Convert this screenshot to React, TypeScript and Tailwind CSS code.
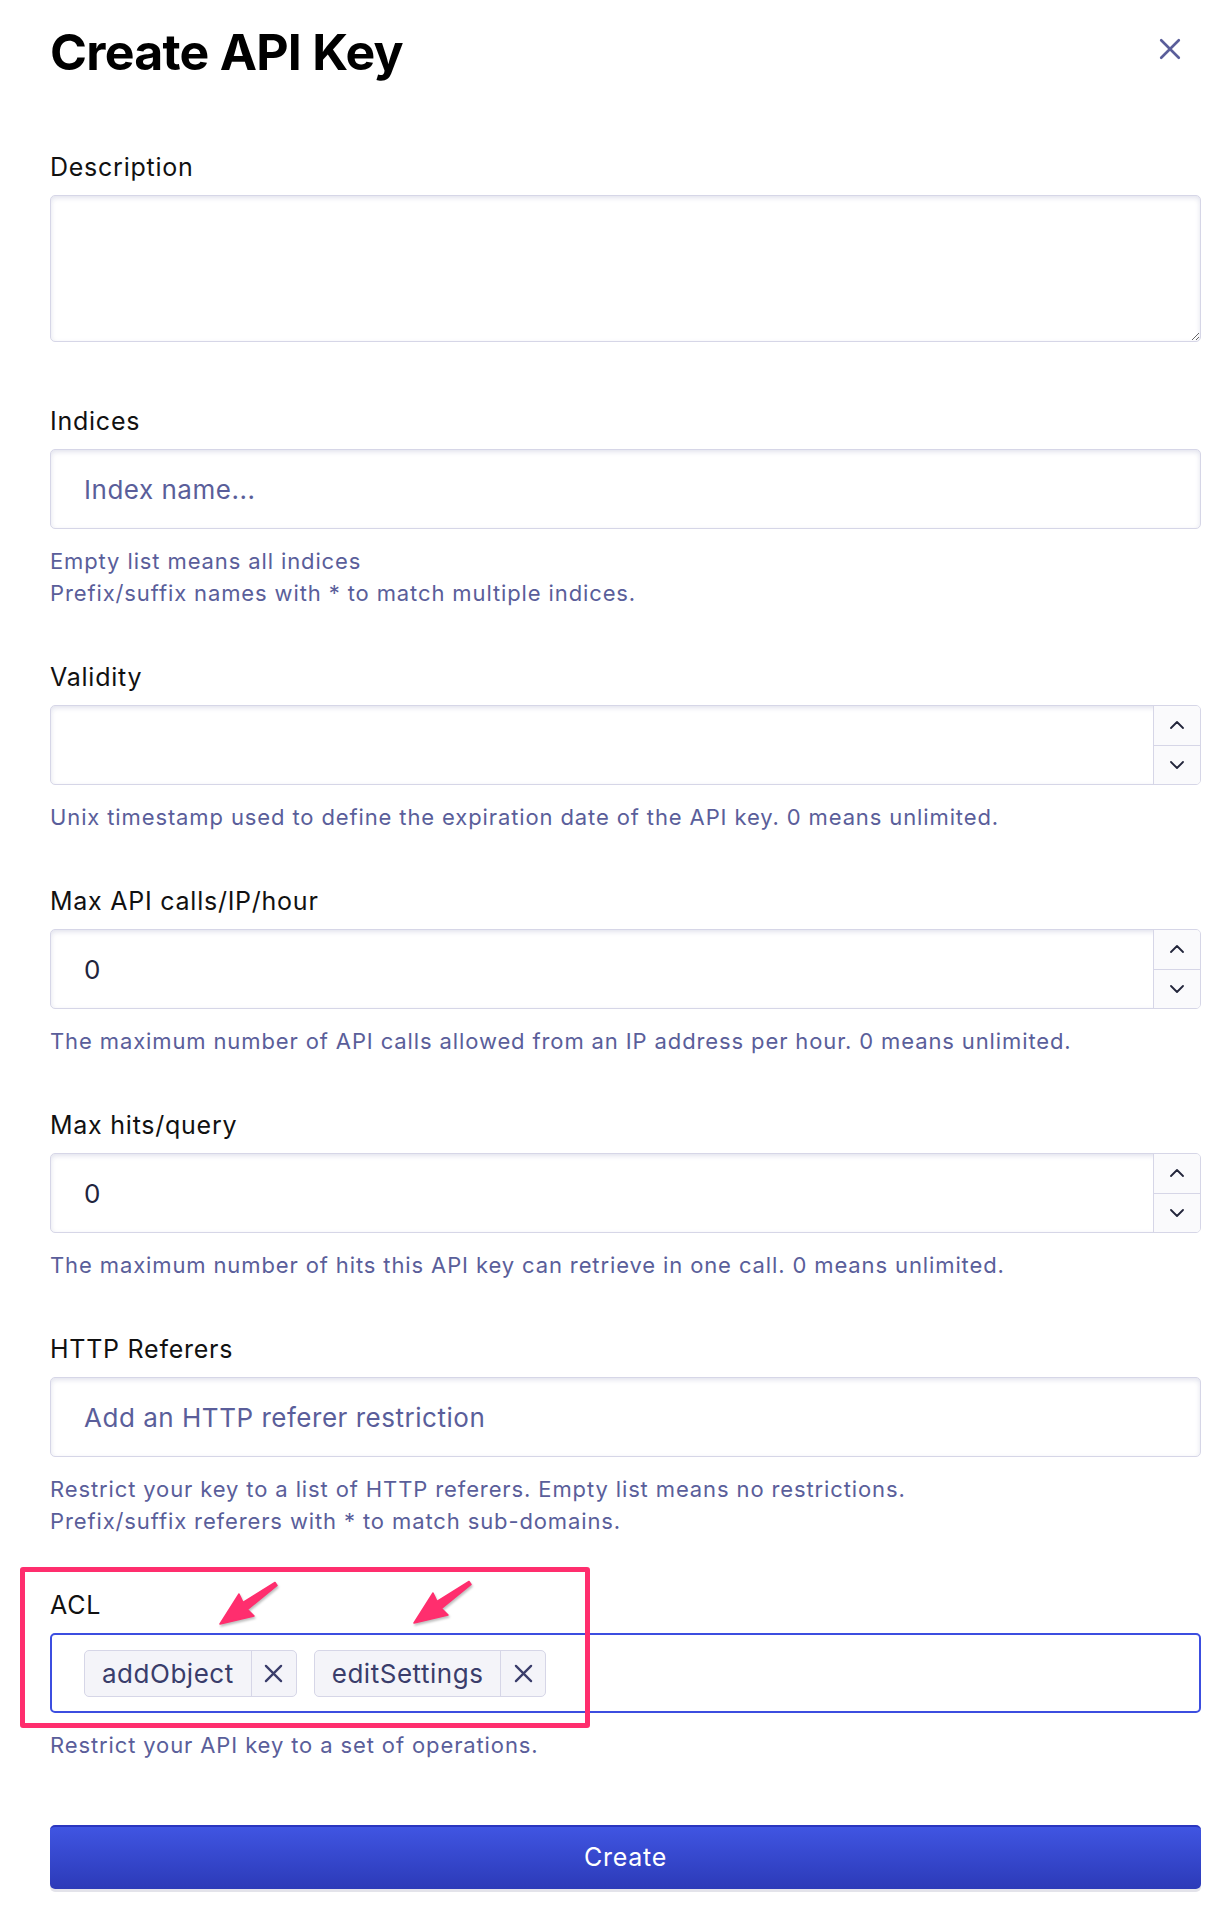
import React from "react";

const font = { fontFamily: "Inter, 'Liberation Sans', sans-serif" };

const Chevron = ({ up }: { up?: boolean }) => (
  <svg width="14" height="8" viewBox="0 0 14 8" fill="none">
    <path
      d={up ? "M1 7 7 1l6 6" : "M1 1l6 6 6-6"}
      stroke="#23263b"
      strokeWidth="1.8"
      strokeLinecap="round"
      strokeLinejoin="round"
    />
  </svg>
);

const Cross = ({ size, color, width }: { size: number; color: string; width: number }) => (
  <svg width={size} height={size} viewBox="0 0 20 20" fill="none">
    <path d="M2 2l16 16M18 2 2 18" stroke={color} strokeWidth={width} strokeLinecap="round" />
  </svg>
);

// pink annotation arrow, pointing down-left
const Arrow = () => (
  <svg width="70" height="54" viewBox="0 0 70 54" fill="none">
    <polygon
      points="60,3.5 28,23.5 24,15 5,45 39,37 32.5,30.5 62,6.5"
      fill="#ff2e6e"
      stroke="#ff2e6e"
      strokeWidth="1.5"
      strokeLinejoin="round"
    />
  </svg>
);

const inputBox =
  "h-[80px] w-full rounded-[5px] border border-[#d6d6e7] bg-white shadow-[inset_0_2px_5px_rgba(119,122,175,0.22)]";

const Field = ({
  label,
  help,
  children,
}: {
  label: string;
  help?: string[];
  children: React.ReactNode;
}) => (
  <div className="flex flex-col">
    <label className="h-[32px] text-[25px] leading-[32px] tracking-[0.03em] text-[#111]">{label}</label>
    <div className="mt-3">{children}</div>
    {help && (
      <div className="mt-4 text-[22px] leading-[32px] tracking-[0.04em] text-[#5a5e9a]">
        {help.map((h) => (
          <div key={h}>{h}</div>
        ))}
      </div>
    )}
  </div>
);

const NumberInput = ({ value }: { value: string }) => (
  <div className={`${inputBox} flex overflow-hidden`}>
    <div className="flex flex-1 items-center px-[33px] text-[26px] text-[#21243d]">{value}</div>
    <div className="flex w-[47px] flex-col border-l border-[#d6d6e7] bg-[#fafafc]">
      <div className="flex flex-1 items-center justify-center border-b border-[#d6d6e7]">
        <Chevron up />
      </div>
      <div className="flex flex-1 items-center justify-center">
        <Chevron />
      </div>
    </div>
  </div>
);

const Tag = ({ name }: { name: string }) => (
  <div className="flex h-[47px] items-stretch rounded-[5px] border border-[#d6d6e7] bg-[#f4f4f9] text-[#3a3d6b]">
    <span className="flex items-center px-[17px] text-[26px] tracking-[0.02em]">{name}</span>
    <span className="flex w-[45px] items-center justify-center border-l border-[#d6d6e7]">
      <Cross size={19} color="#3a3d6b" width={2.4} />
    </span>
  </div>
);

export default function App() {
  return (
    <div className="min-h-[1932px] w-[1226px] bg-white pl-[50px] pr-[25px]" style={font}>
      <div className="flex h-[82px] items-end justify-between">
        <h1 className="h-[60px] text-[50px] font-bold leading-[60px] tracking-[-0.015em] text-black">
          Create API Key
        </h1>
        <button className="mb-[22px] mr-[20px]">
          <Cross size={22} color="#5a5e9a" width={2.4} />
        </button>
      </div>

      <div className="mt-[69px] flex flex-col gap-[52px]">
        <div className="mb-[11px]">
          <Field label="Description">
            <textarea className="block h-[147px] w-full resize-y rounded-[5px] border border-[#d6d6e7] bg-white shadow-[inset_0_2px_5px_rgba(119,122,175,0.22)] outline-none" />
          </Field>
        </div>

        <Field
          label="Indices"
          help={["Empty list means all indices", "Prefix/suffix names with * to match multiple indices."]}
        >
          <input
            className={`${inputBox} px-[33px] text-[26px] tracking-[0.02em] outline-none placeholder:text-[#5a5e9a]`}
            placeholder="Index name..."
          />
        </Field>

        <Field
          label="Validity"
          help={["Unix timestamp used to define the expiration date of the API key. 0 means unlimited."]}
        >
          <NumberInput value="" />
        </Field>

        <Field
          label="Max API calls/IP/hour"
          help={["The maximum number of API calls allowed from an IP address per hour. 0 means unlimited."]}
        >
          <NumberInput value="0" />
        </Field>

        <Field
          label="Max hits/query"
          help={["The maximum number of hits this API key can retrieve in one call. 0 means unlimited."]}
        >
          <NumberInput value="0" />
        </Field>

        <Field
          label="HTTP Referers"
          help={[
            "Restrict your key to a list of HTTP referers. Empty list means no restrictions.",
            "Prefix/suffix referers with * to match sub-domains.",
          ]}
        >
          <input
            className={`${inputBox} px-[33px] text-[26px] tracking-[0.02em] outline-none placeholder:text-[#5a5e9a]`}
            placeholder="Add an HTTP referer restriction"
          />
        </Field>

        <div className="relative">
          <Field label="ACL" help={["Restrict your API key to a set of operations."]}>
            <div className="flex h-[80px] items-center gap-[17px] rounded-[5px] border-2 border-[#3c4ee0] bg-white px-[32px]">
              <Tag name="addObject" />
              <Tag name="editSettings" />
            </div>
          </Field>
          <div className="pointer-events-none absolute left-[-30px] top-[-22px] h-[161px] w-[570px] rounded-[3px] border-[5px] border-[#ff2e6e]" />
          <div className="pointer-events-none absolute left-[165px] top-[-10px] drop-shadow-[1px_2px_1px_rgba(0,0,0,0.25)]">
            <Arrow />
          </div>
          <div className="pointer-events-none absolute left-[359px] top-[-11px] drop-shadow-[1px_2px_1px_rgba(0,0,0,0.25)]">
            <Arrow />
          </div>
        </div>
      </div>

      <button className="mt-[64px] flex h-[64px] w-full items-center justify-center rounded-[5px] border-t-2 border-[#2a36bf] bg-gradient-to-b from-[#4055e2] to-[#2c3ab8] text-[25px] tracking-[0.03em] text-white shadow-[0_3px_0_#e3e3ea]">
        Create
      </button>
    </div>
  );
}
